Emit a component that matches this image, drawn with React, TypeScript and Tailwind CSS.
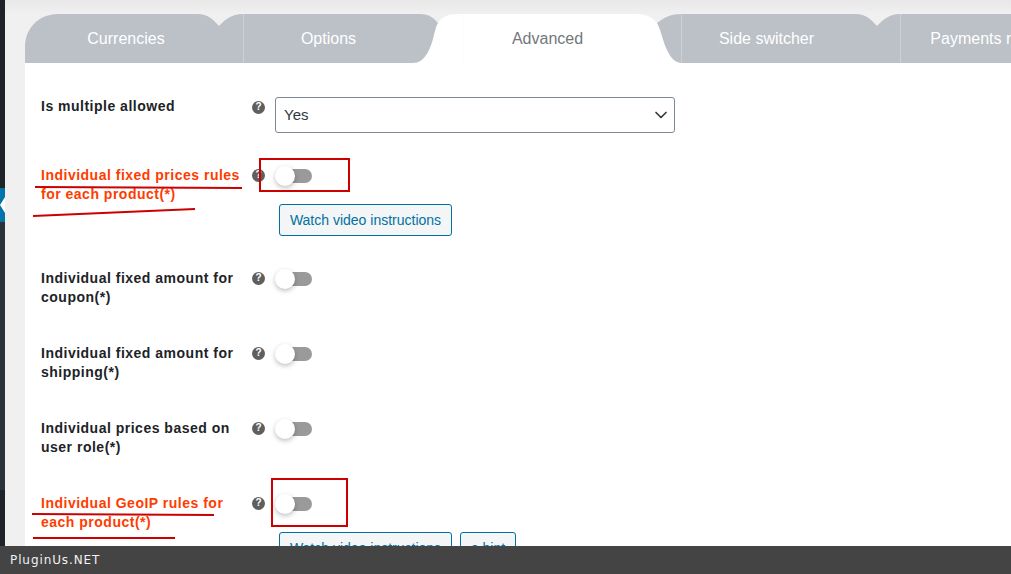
import { ReactNode } from 'react';
import { ChevronDown } from 'lucide-react';

const FONT = "font-['Liberation_Sans',Arial,sans-serif]";

function TabShapes() {
  return (
    <svg className="absolute left-0 top-0" width="986" height="49" viewBox="0 0 986 49">
      <path
        d="M0 49V33C0 14 14 0 33 0H172C184 0 188 6 194 12C200 6 206 0 218 0H395C404 0 409 4 413 9H632C640 3 646 0 656 0H830C842 0 846 6 852 12C858 6 864 0 875 0H986V49Z"
        fill="#bcc0c7"
      />
      <path
        d="M388 49C400 49 405 35 408 25C410 17 411 12 413 9C417 3 423 0 432 0H612C622 0 628 4 632 9C636 16 638 28 642 36C646 44 650 49 657 49Z"
        fill="#fff"
      />
      <path d="M218.5 0V49M656.5 0V49M875.5 0V49" stroke="#cdd0d5" strokeWidth="1" />
      <path d="M437.5 0V49" stroke="#fbfbfb" strokeWidth="1" />
    </svg>
  );
}

function Help() {
  return (
    <span className="flex h-[13px] w-[13px] items-center justify-center rounded-full bg-[#5f5f5f] text-[10px] font-bold leading-none text-white">
      ?
    </span>
  );
}

function Toggle() {
  return (
    <div className="relative mt-px h-[20px] w-[37px]">
      <div className="absolute left-[4px] right-0 top-[3px] h-[14px] rounded-full bg-[#9a9a9a]" />
      <div className="absolute left-0 top-0 h-[20px] w-[20px] rounded-full bg-white shadow-[0_2px_5px_rgba(0,0,0,0.25)]" />
    </div>
  );
}

function WpButton({ children, className }: { children: ReactNode; className: string }) {
  return (
    <button className={`flex h-[32px] items-center justify-center rounded-[3px] border border-[#0071a1] bg-[#f3f5f6] text-[14px] text-[#0071a1] ${className}`}>
      {children}
    </button>
  );
}

function Row({ label, red, className, labelClass, children }: { label: ReactNode; red?: boolean; className: string; labelClass?: string; children: ReactNode }) {
  return (
    <div className={`grid grid-cols-[211px_23px_1fr] ${className}`}>
      <div className={`text-[14px] font-bold leading-[19px] tracking-[0.5px] ${labelClass ?? 'pt-px'} ${red ? 'text-[#ff3c00]' : 'text-[#1d2327]'}`}>
        {label}
      </div>
      <div className="flex h-[20px] items-center">
        <Help />
      </div>
      <div>{children}</div>
    </div>
  );
}

export default function App() {
  return (
    <div className={`relative flex h-screen flex-col overflow-hidden bg-[#f0f0f1] ${FONT}`}>
      <div className="flex min-h-0 flex-1">
        {/* admin menu edge */}
        <div className="flex w-[5px] shrink-0 flex-col bg-[#1d2327]">
          <div className="h-[188px] shrink-0" />
          <div className="relative h-[34px] shrink-0 bg-[#0073aa]">
            <div className="absolute left-0 top-[9px] h-0 w-0 border-y-[8px] border-r-[5px] border-y-transparent border-r-white" />
          </div>
          <div className="h-[268px] shrink-0 bg-[#2c3338]" />
        </div>

        <div className="min-w-0 flex-1">
          <div className="h-[14px] bg-gradient-to-b from-[#e8e8e8] to-[#f0f0f1]" />
          <div className="pl-[20px]">
            <div className="relative h-[49px]">
              <TabShapes />
              <div className="relative flex h-full items-center text-[16px] text-white">
                <div className="w-[194px] shrink-0 pl-2 text-center">Currencies</div>
                <div className="w-[219px] shrink-0 text-center">Options</div>
                <div className="w-[219px] shrink-0 text-center text-[#72777c]">Advanced</div>
                <div className="w-[219px] shrink-0 text-center">Side switcher</div>
                <div className="w-[219px] shrink-0 text-center">Payments rules</div>
              </div>
            </div>

            <div className="h-[600px] bg-white pl-4 pt-[34px]">
              <Row label="Is multiple allowed" labelClass="pt-0" className="mb-[32px]">
                <div className="relative w-[400px]">
                  <select className="h-[36px] w-full appearance-none rounded-[3px] border border-[#7e8993] bg-white pl-2 pt-px text-[15px] text-[#32373c]">
                    <option>Yes</option>
                  </select>
                  <ChevronDown className="pointer-events-none absolute right-[4px] top-[8px] h-[20px] w-[20px] text-[#32373c]" strokeWidth={2} />
                </div>
              </Row>

              <Row red label={<>Individual fixed prices rules<br />for each product(*)</>} className="mb-[32px]">
                <Toggle />
                <WpButton className="ml-[4px] mt-[18px] w-[173px]">Watch video instructions</WpButton>
              </Row>

              <Row label={<>Individual fixed amount for<br />coupon(*)</>} className="mb-[36px]">
                <Toggle />
              </Row>

              <Row label={<>Individual fixed amount for<br />shipping(*)</>} className="mb-[36px]">
                <Toggle />
              </Row>

              <Row label={<>Individual prices based on<br />user role(*)</>} className="mb-[36px]">
                <Toggle />
              </Row>

              <Row red label={<>Individual GeoIP rules for<br />each product(*)</>} className="">
                <Toggle />
                <div className="ml-[4px] mt-[18px] flex gap-[8px]">
                  <WpButton className="w-[173px]">Watch video instructions</WpButton>
                  <WpButton className="w-[56px]">a hint</WpButton>
                </div>
              </Row>
            </div>
          </div>
        </div>
      </div>

      <div className="z-10 flex h-[28px] shrink-0 items-center bg-[#444444] pl-[10px] font-['DejaVu_Sans',sans-serif] text-[12px] tracking-[0.9px] text-[#f2f2f2]">
        PluginUs.NET
      </div>

      {/* hand-drawn red marks on the screenshot */}
      <svg className="pointer-events-none absolute left-0 top-0" width="1011" height="546" viewBox="0 0 1011 546" fill="none" stroke="#cc0000" strokeWidth="2">
        <rect x="260" y="159" width="89" height="32" />
        <rect x="272" y="479" width="75" height="47" />
        <path d="M35 187L242 188" />
        <path d="M33 216L195 209" />
        <path d="M32 514L214 515" />
        <path d="M33 538L175 538" />
      </svg>
    </div>
  );
}
